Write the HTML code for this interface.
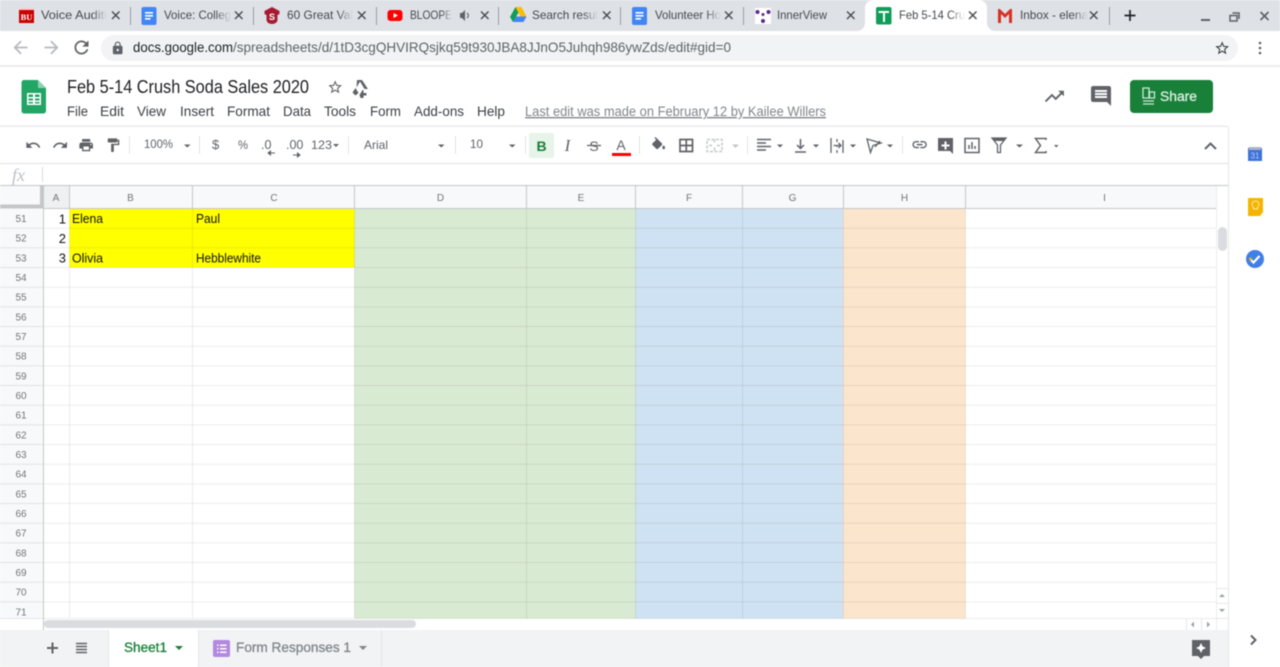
<!DOCTYPE html>
<html><head><meta charset="utf-8"><title>Feb 5-14 Crush Soda Sales 2020</title>
<style>
html,body{margin:0;padding:0;width:1280px;height:667px;overflow:hidden;background:#fff}
svg{display:block;position:absolute;left:0;top:0;filter:blur(.5px)}
text{font-family:"Liberation Sans",sans-serif}
</style></head><body>
<svg width="1280" height="667" viewBox="0 0 1280 667" xmlns="http://www.w3.org/2000/svg">
<defs>
<linearGradient id="fd"><stop offset="0" stop-color="#dee1e6" stop-opacity="0"/><stop offset="1" stop-color="#dee1e6"/></linearGradient>
<linearGradient id="fw"><stop offset="0" stop-color="#fff" stop-opacity="0"/><stop offset="1" stop-color="#fff"/></linearGradient>
</defs>
<!-- tab strip -->
<rect width="1280" height="31" fill="#dee1e6"/>
<path d="M857 31a8 8 0 0 0 8-8V8a8 8 0 0 1 8-8h106a8 8 0 0 1 8 8v15a8 8 0 0 0 8 8z" fill="#fff"/>
<g stroke="#9aa0a6" stroke-width="1">
<path d="M130.500 7v18M253.500 7v18M376.500 7v18M498.500 7v18M620.500 7v18M743.500 7v18M1109.500 7v18"/>
</g>
<g font-size="12" fill="#45494e">
<text x="41" y="19" textLength="66" lengthAdjust="spacingAndGlyphs">Voice Auditi</text>
<text x="164" y="19" textLength="67" lengthAdjust="spacingAndGlyphs">Voice: Colleg</text>
<text x="287" y="19" textLength="66" lengthAdjust="spacingAndGlyphs">60 Great Val</text>
<text x="410" y="19" textLength="42" lengthAdjust="spacingAndGlyphs">BLOOPE</text>
<text x="532" y="19" textLength="66" lengthAdjust="spacingAndGlyphs">Search resul</text>
<text x="655" y="19" textLength="66" lengthAdjust="spacingAndGlyphs">Volunteer Ho</text>
<text x="777" y="19" textLength="50" lengthAdjust="spacingAndGlyphs">InnerView</text>
<text x="899" y="19" textLength="66" lengthAdjust="spacingAndGlyphs">Feb 5-14 Cru</text>
<text x="1020" y="19" textLength="68" lengthAdjust="spacingAndGlyphs">Inbox - elena</text>
</g>
<g fill="url(#fd)">
<rect x="92" y="6" width="15" height="18"/><rect x="216" y="6" width="15" height="18"/><rect x="338" y="6" width="15" height="18"/><rect x="442" y="6" width="10" height="18"/><rect x="583" y="6" width="15" height="18"/><rect x="706" y="6" width="15" height="18"/><rect x="1073" y="6" width="15" height="18"/>
</g>
<rect x="950" y="6" width="15" height="18" fill="url(#fw)"/>
<!-- close x -->
<g stroke="#45494e" stroke-width="1.400" fill="none">
<path d="M112 11.500l7.500 7.500m0-7.500l-7.500 7.500M235 11.500l7.500 7.500m0-7.500l-7.500 7.500M358 11.500l7.500 7.500m0-7.500l-7.500 7.500M481 11.500l7.500 7.500m0-7.500l-7.500 7.500M603 11.500l7.500 7.500m0-7.500l-7.500 7.500M725 11.500l7.500 7.500m0-7.500l-7.500 7.500M847 11.500l7.500 7.500m0-7.500l-7.500 7.500M969 11.500l7.500 7.500m0-7.500l-7.500 7.500M1090 11.500l7.500 7.500m0-7.500l-7.500 7.500"/>
</g>
<!-- favicons -->
<rect x="19" y="8" width="15" height="15" fill="#cc0000"/><rect x="19" y="8" width="15" height="2" fill="#fff" opacity=".8"/>
<text x="26.500" y="20" font-size="8.500" font-weight="bold" fill="#fff" text-anchor="middle" style="font-family:'Liberation Serif',serif">BU</text>
<rect x="141.500" y="7" width="15" height="18" rx="2" fill="#4285f4"/><path d="M145 12h8v1.600h-8zM145 15h8v1.600h-8zM145 18h5.500v1.600h-5.500z" fill="#fff"/>
<path d="M272 7l7.500 4v3l-2 1v5a5.500 4 0 0 1-11 0v-5l-2-1v-3z" fill="#a51c30"/>
<text x="272" y="20" font-size="9" font-weight="bold" fill="#fff" text-anchor="middle">S</text>
<rect x="387.500" y="10" width="15" height="11" rx="3" fill="#f00"/><path d="M393.500 13l4.500 2.500-4.500 2.500z" fill="#fff"/>
<path d="M513 22l3-5.500h10.500l-3 5.500z" fill="#4285f4"/><path d="M510 17l5.500-10 3 5.500L513 22z" fill="#0f9d58"/><path d="M515.500 7h6l5 9.500h-6z" fill="#fbbc04"/>
<rect x="632" y="7" width="15" height="18" rx="2" fill="#4285f4"/><path d="M635.500 12h8v1.600h-8zM635.500 15h8v1.600h-8zM635.500 18h5.500v1.600h-5.500z" fill="#fff"/>
<rect x="755" y="8" width="16" height="16" fill="#fff"/>
<g fill="#5b2a86"><circle cx="757.500" cy="12" r="2"/><circle cx="768.500" cy="12" r="2"/><circle cx="763" cy="21" r="2"/><circle cx="763" cy="14.500" r="1.500"/></g>
<rect x="876" y="7" width="15.500" height="17.500" rx="2" fill="#0f9d58"/><path d="M878.500 11h10.500v2H885v9h-2v-9h-4.500z" fill="#fff"/>
<path d="M998 23V9h1.800l5.200 5 5.200-5h1.800v14h-3V14l-4 4-4-4v9z" fill="#d93025"/>
<!-- speaker -->
<path d="M460 13h2l3-3v11l-3-3h-2z" fill="#5f6368"/><path d="M467 13a3 3 0 0 1 0 5" stroke="#5f6368" stroke-width="1.100" fill="none"/>
<!-- new tab + window buttons -->
<path d="M1130 10v11M1124.500 15.500h11" stroke="#202124" stroke-width="1.700"/>
<path d="M1201 20h9" stroke="#5f6368" stroke-width="2"/>
<path d="M1230 15.500h7v5.500h-7zM1232.500 13h6.500v6" stroke="#5f6368" stroke-width="1.500" fill="none"/>
<path d="M1260.500 12l8 8m0-8l-8 8" stroke="#5f6368" stroke-width="1.700"/>
<!-- address bar -->
<rect y="31" width="1280" height="34" fill="#fff"/>
<rect x="101" y="35" width="1137" height="26" rx="13" fill="#f1f3f4"/>
<rect x="0" y="65" width="1280" height="2" fill="#ececee"/>
<path transform="translate(10 37) scale(.875)" d="M20 11H7.830l5.590-5.590L12 4l-8 8 8 8 1.410-1.410L7.830 13H20v-2z" fill="#b6b9bd"/>
<path transform="translate(41 37) scale(.875)" d="M12 4l-1.410 1.410L16.170 11H4v2h12.170l-5.580 5.590L12 20l8-8z" fill="#b6b9bd"/>
<path transform="translate(71 37) scale(.875)" d="M17.650 6.350C16.200 4.900 14.210 4 12 4c-4.420 0-7.990 3.580-7.990 8s3.570 8 7.990 8c3.730 0 6.840-2.550 7.730-6h-2.080c-.82 2.330-3.040 4-5.650 4-3.310 0-6-2.690-6-6s2.690-6 6-6c1.660 0 3.140.69 4.220 1.780L13 11h7V4l-2.350 2.350z" fill="#5f6368"/>
<path transform="translate(110.500 41) scale(.6)" d="M18 8h-1V6c0-2.760-2.240-5-5-5S7 3.240 7 6v2H6c-1.100 0-2 .9-2 2v10c0 1.100.9 2 2 2h12c1.100 0 2-.9 2-2V10c0-1.100-.9-2-2-2zm-6 9c-1.100 0-2-.9-2-2s.9-2 2-2 2 .9 2 2-.9 2-2 2zm3.100-9H8.900V6c0-1.710 1.390-3.100 3.100-3.100 1.710 0 3.100 1.390 3.100 3.100v2z" fill="#5f6368"/>
<text x="133" y="52" font-size="14" fill="#202124" textLength="100" lengthAdjust="spacingAndGlyphs">docs.google.com</text>
<text x="233" y="52" font-size="14" fill="#5f6368" textLength="498" lengthAdjust="spacingAndGlyphs">/spreadsheets/d/1tD3cgQHVIRQsjkq59t930JBA8JJnO5Juhqh986ywZds/edit#gid=0</text>
<path transform="translate(1214 40) scale(.68)" d="M22 9.240l-7.190-.62L12 2 9.190 8.630 2 9.240l5.460 4.730L5.820 21 12 17.270 18.180 21l-1.630-7.030L22 9.240zM12 15.400l-3.760 2.270 1-4.280-3.320-2.880 4.380-.38L12 6.100l1.710 4.040 4.380.38-3.320 2.880 1 4.280L12 15.400z" fill="#3c4043"/>
<g fill="#5f6368"><circle cx="1260" cy="43" r="1.300"/><circle cx="1260" cy="48" r="1.300"/><circle cx="1260" cy="53" r="1.300"/></g>
<!-- sheets header -->
<path d="M24 80h14l8 8v23a2.500 2.500 0 0 1-2.500 2.500h-19.500a2.500 2.500 0 0 1-2.500-2.500V82.500A2.500 2.500 0 0 1 24 80z" fill="#23a566"/>
<path d="M38 80l8 8h-8z" fill="#8ed1b1"/>
<path d="M27 93h14v12H27zM28.500 94.500v2.500h4.500v-2.500zM35 94.500v2.500h4.500v-2.500zM28.500 98.500v2h4.500v-2zM35 98.500v2h4.500v-2zM28.500 102v1.500h4.500V102zM35 102v1.500h4.500V102z" fill="#fff" fill-rule="evenodd"/>
<text x="67" y="93" font-size="18" fill="#202124" textLength="242" lengthAdjust="spacingAndGlyphs">Feb 5-14 Crush Soda Sales 2020</text>
<path transform="translate(327 79) scale(.68)" d="M22 9.240l-7.190-.62L12 2 9.190 8.630 2 9.240l5.460 4.730L5.820 21 12 17.270 18.180 21l-1.630-7.030L22 9.240zM12 15.400l-3.760 2.270 1-4.280-3.320-2.880 4.380-.38L12 6.100l1.710 4.040 4.380.38-3.320 2.880 1 4.280L12 15.400z" fill="#5f6368"/>
<path d="M357 80h5l6 9h-3.500L360 81.500l-3.500 6zM355.500 88l3 5-3 2.500-3-3zM359.500 95l3-5h1v3h3v2.500h-3V98h-3z" fill="#5f6368"/>
<g font-size="14" fill="#3c4043">
<text x="67" y="116" textLength="21" lengthAdjust="spacingAndGlyphs">File</text>
<text x="100" y="116" textLength="24" lengthAdjust="spacingAndGlyphs">Edit</text>
<text x="137" y="116" textLength="29" lengthAdjust="spacingAndGlyphs">View</text>
<text x="180" y="116" textLength="34" lengthAdjust="spacingAndGlyphs">Insert</text>
<text x="227" y="116" textLength="43" lengthAdjust="spacingAndGlyphs">Format</text>
<text x="283" y="116" textLength="28" lengthAdjust="spacingAndGlyphs">Data</text>
<text x="324" y="116" textLength="32" lengthAdjust="spacingAndGlyphs">Tools</text>
<text x="370" y="116" textLength="31" lengthAdjust="spacingAndGlyphs">Form</text>
<text x="414" y="116" textLength="50" lengthAdjust="spacingAndGlyphs">Add-ons</text>
<text x="477" y="116" textLength="28" lengthAdjust="spacingAndGlyphs">Help</text>
</g>
<text x="525" y="116" font-size="13.500" fill="#80868b" textLength="301" lengthAdjust="spacingAndGlyphs" text-decoration="underline">Last edit was made on February 12 by Kailee Willers</text>
<path transform="translate(1043 85) scale(.95)" d="M16 6l2.290 2.290-4.880 4.880-4-4L2 16.590 3.410 18l6-6 4 4 6.300-6.290L22 12V6z" fill="#5f6368"/>
<path transform="translate(1089 84)" d="M20 2H4c-1.100 0-2 .9-2 2v12c0 1.100.9 2 2 2h14l4 4V4c0-1.100-.9-2-2-2zm-2 12H6v-2h12v2zm0-3H6V9h12v2zm0-3H6V6h12v2z" fill="#5f6368"/>
<rect x="1130" y="80" width="83" height="33" rx="4" fill="#188038"/>
<path d="M1143 88h6v10h-6zM1149.500 92h5v6h-5z" fill="none" stroke="#cfe8d8" stroke-width="1.300"/>
<path d="M1143 101h11M1143 104h11" stroke="#cfe8d8" stroke-width="1.200"/>
<text x="1160" y="101" font-size="13.500" fill="#dff0e5" stroke="#dff0e5" stroke-width=".3" textLength="37" lengthAdjust="spacingAndGlyphs">Share</text>
<circle cx="1246" cy="96" r="15" fill="#8a5a46"/>
<circle cx="1240" cy="90" r="5" fill="#c9605c"/><circle cx="1252" cy="87" r="4" fill="#d9c4a8"/><circle cx="1239" cy="104" r="5.500" fill="#6fa78f"/><circle cx="1253" cy="100" r="6" fill="#6e3d2c"/><circle cx="1249" cy="107" r="3.500" fill="#d29a88"/><circle cx="1257" cy="92" r="2.500" fill="#e4a34d"/>
<!-- dividers -->
<rect x="0" y="125.500" width="1228" height="1.500" fill="#e8eaed"/>
<rect x="0" y="163" width="1228" height="1" fill="#e0e0e0"/>
<!-- toolbar -->
<g fill="#5f6368">
<path transform="translate(25 137) scale(.68)" d="M12.500 8c-2.650 0-5.050.99-6.900 2.600L2 7v9h9l-3.620-3.620c1.390-1.160 3.160-1.880 5.120-1.880 3.540 0 6.550 2.310 7.600 5.500l2.370-.78C21.080 11.030 17.150 8 12.500 8z"/>
<path transform="translate(52 137) scale(.68)" d="M18.400 10.600C16.550 8.990 14.150 8 11.500 8c-4.650 0-8.580 3.030-9.960 7.220L3.900 16c1.050-3.190 4.050-5.500 7.600-5.500 1.950 0 3.730.72 5.120 1.880L13 16h9V7l-3.600 3.600z"/>
<path transform="translate(78 137) scale(.68)" d="M19 8H5c-1.660 0-3 1.340-3 3v6h4v4h12v-4h4v-6c0-1.660-1.340-3-3-3zm-3 11H8v-5h8v5zm3-7c-.55 0-1-.45-1-1s.45-1 1-1 1 .45 1 1-.45 1-1 1zm-1-9H6v4h12V3z"/>
<path transform="translate(105 137) scale(.68)" d="M18 4V3c0-.55-.45-1-1-1H5c-.55 0-1 .45-1 1v4c0 .55.45 1 1 1h12c.55 0 1-.45 1-1V6h1v4H9v11c0 .55.45 1 1 1h2c.55 0 1-.45 1-1v-9h8V4h-3z"/>
</g>
<g stroke="#e2e3e5" stroke-width="1"><path d="M129.500 136v18M199.500 136v18M348.500 136v18M455.500 136v18M525.500 136v18M639.500 136v18M747.500 136v18M902.500 136v18"/></g>
<g font-size="12" fill="#5f6368">
<text x="144" y="148" textLength="29" lengthAdjust="spacingAndGlyphs">100%</text>
<text x="212" y="149" font-size="13">$</text>
<text x="238" y="149" textLength="10" lengthAdjust="spacingAndGlyphs">%</text>
<text x="261" y="149" font-size="12.500">.0</text>
<text x="286" y="149" font-size="12.500">.00</text>
<text x="311" y="149" textLength="21" lengthAdjust="spacingAndGlyphs">123</text>
<text x="364" y="149" textLength="24" lengthAdjust="spacingAndGlyphs">Arial</text>
<text x="470" y="148" textLength="13" lengthAdjust="spacingAndGlyphs">10</text>
</g>
<path d="M268 153h7M268 153l2.500-2v4zM293 155h7M300 155l-2.500-2v4z" stroke="#5f6368" stroke-width="1" fill="#5f6368"/>
<g fill="#5f6368">
<path d="M184 144.500h6.500l-3.250 3zM333 144h6l-3 3zM438 144.500h6.500l-3.250 3zM509 144.500h6.500l-3.250 3z"/>
<path d="M777 144.500h6l-3 3zM813 144.500h6l-3 3zM850 144.500h6l-3 3zM887 144.500h6l-3 3zM1016 144.500h7l-3.500 3zM1054 145h4.500l-2.250 2.500z"/>
</g>
<path d="M732 144.500h7l-3.500 3.500z" fill="#c4c7c9"/>
<rect x="529" y="133" width="25" height="25" rx="2" fill="#e6f4ea"/>
<text x="541.500" y="151" font-size="14" font-weight="bold" fill="#188038" text-anchor="middle">B</text>
<text x="567.500" y="151" font-size="17" font-style="italic" fill="#5f6368" text-anchor="middle" style="font-family:'Liberation Serif',serif">I</text>
<text x="594" y="151" font-size="14" fill="#5f6368" text-anchor="middle">S</text>
<path d="M587 145.500h14" stroke="#5f6368" stroke-width="1.300"/>
<text x="621" y="150" font-size="14" fill="#5f6368" text-anchor="middle">A</text>
<rect x="612" y="153" width="19" height="3" fill="#f00"/>
<path transform="translate(650 137) scale(.72)" d="M16.560 8.940L7.620 0 6.210 1.410l2.380 2.380-5.150 5.150c-.59.59-.59 1.540 0 2.120l5.500 5.500c.29.29.68.44 1.060.44s.77-.15 1.060-.44l5.500-5.500c.59-.58.59-1.530 0-2.120zM19 11.500s-2 2.170-2 3.500c0 1.100.9 2 2 2s2-.9 2-2c0-1.330-2-3.500-2-3.500z" fill="#5f6368"/>
<path d="M680 139.500h12.500v12H680zM686.250 139.500v12M680 145.500h12.500" stroke="#5f6368" stroke-width="1.700" fill="none"/>
<path d="M707 139.500h15v12h-15zM714.500 139.500v4M714.500 147.500v4M709 145.500h3M717 145.500h3" stroke="#c4c7c9" stroke-width="1.500" stroke-dasharray="3 1.500" fill="none"/>
<path d="M757 139.500h14M757 143h9M757 146.500h14M757 150h9" stroke="#5f6368" stroke-width="1.500" fill="none"/>
<path d="M800.500 139v9M797 145l3.500 3.500 3.500-3.500M795 152h11" stroke="#5f6368" stroke-width="1.500" fill="none"/>
<path d="M831 138v15M843 140v13M837 139v3M837 145v2M837 150v3M833.500 145.500h7M838.500 143l2.500 2.500-2.500 2.500" stroke="#5f6368" stroke-width="1.300" fill="none"/>
<path d="M867 139l14 4-8 2.500-2.500 7zM875 147l5-6" stroke="#5f6368" stroke-width="1.300" fill="none"/>
<path transform="translate(911 136) scale(.72)" d="M3.900 12c0-1.710 1.390-3.100 3.100-3.100h4V7H7c-2.760 0-5 2.240-5 5s2.240 5 5 5h4v-1.900H7c-1.710 0-3.100-1.390-3.100-3.100zM8 13h8v-2H8v2zm9-6h-4v1.900h4c1.710 0 3.100 1.390 3.100 3.100s-1.390 3.100-3.100 3.100h-4V17h4c2.760 0 5-2.240 5-5s-2.240-5-5-5z" fill="#5f6368"/>
<path d="M938 138h15v16l-3-3h-12zM944.500 141.500v3h-3v2h3v3h2v-3h3v-2h-3v-3z" fill="#5f6368" fill-rule="evenodd"/>
<path d="M965 138.500h14v14h-14zM969 149v-4M972 149v-7M975 149v-3" stroke="#5f6368" stroke-width="1.500" fill="none"/>
<path d="M992 138h14l-5.500 7v7.500h-3V145z" fill="#fff" stroke="#5f6368" stroke-width="1.300"/><path d="M992 138h14l-2.500 3h-9z" fill="#5f6368"/>
<path d="M1046 140v-1.500h-10.500l5 7-5 7H1046V151" stroke="#5f6368" stroke-width="1.500" fill="none"/>
<path d="M1205 149l5.500-5.500 5.500 5.500" stroke="#5f6368" stroke-width="2" fill="none"/>
<!-- formula bar -->
<text x="12" y="181" font-size="18" font-style="italic" fill="#bdc1c6" style="font-family:'Liberation Serif',serif">fx</text>
<path d="M42.500 167v15" stroke="#dadce0"/>
<rect y="185" width="1228" height="1.500" fill="#c4c7c9"/>
<!-- grid backgrounds -->
<rect x="0" y="186" width="1216" height="22" fill="#f8f9fa"/>
<rect x="43" y="186" width="26" height="22" fill="#eef0f1"/>
<rect x="0" y="208" width="43" height="411" fill="#f8f9fa"/>
<rect x="69.500" y="208.500" width="285" height="59" fill="#ffff00"/>
<rect x="354.500" y="208.500" width="281" height="410" fill="#d9ead3"/>
<rect x="635.500" y="208.500" width="207.500" height="410" fill="#cfe2f3"/>
<rect x="843" y="208.500" width="122.500" height="410" fill="#fce5cd"/>
<rect x="1216" y="186" width="12" height="444" fill="#fff"/>
<rect x="40" y="186" width="3.500" height="22" fill="#c4c7c9"/>
<rect x="0" y="204.500" width="43" height="4" fill="#c4c7c9"/>
<!-- grid lines -->
<g stroke="#000" stroke-opacity=".075" stroke-width="1" fill="none">
<path d="M43 228.200H1216M43 247.800H1216M43 267.500H1216M43 287.200H1216M43 306.900H1216M43 326.500H1216M43 346.200H1216M43 365.900H1216M43 385.500H1216M43 405.200H1216M43 424.900H1216M43 444.500H1216M43 464.200H1216M43 483.900H1216M43 503.500H1216M43 523.200H1216M43 542.900H1216M43 562.500H1216M43 582.200H1216M43 601.900H1216M0 618.500H1228"/>
<path d="M69.500 208V618M192.500 208V618M354.500 208V618M526.500 208V618M635.500 208V618M742.500 208V618M843.500 208V618M965.500 208V618M1216.500 186V630"/>
</g>
<g stroke="#e1e3e5" stroke-width="1" fill="none">
<path d="M0 228.200H43M0 247.800H43M0 267.500H43M0 287.200H43M0 306.900H43M0 326.500H43M0 346.200H43M0 365.900H43M0 385.500H43M0 405.200H43M0 424.900H43M0 444.500H43M0 464.200H43M0 483.900H43M0 503.500H43M0 523.200H43M0 542.900H43M0 562.500H43M0 582.200H43M0 601.900H43"/>
</g>
<g stroke="#c4c7c9" stroke-width="1" fill="none">
<path d="M43.500 186V630M69.500 186V208M192.500 186V208M354.500 186V208M526.500 186V208M635.500 186V208M742.500 186V208M843.500 186V208M965.500 186V208M43 208.500H1216"/>
</g>
<!-- column headers -->
<g font-size="10" fill="#70757a" text-anchor="middle">
<text x="56" y="201">A</text><text x="130.500" y="201">B</text><text x="274" y="201">C</text><text x="440.500" y="201">D</text><text x="581" y="201">E</text><text x="689" y="201">F</text><text x="792.500" y="201">G</text><text x="904.500" y="201">H</text><text x="1104.500" y="201">I</text>
</g>
<!-- row headers -->
<g font-size="10" fill="#70757a" text-anchor="middle">
<text x="21" y="222">51</text><text x="21" y="241.700">52</text><text x="21" y="261.300">53</text><text x="21" y="281">54</text><text x="21" y="300.700">55</text><text x="21" y="320.400">56</text><text x="21" y="340">57</text><text x="21" y="359.700">58</text><text x="21" y="379.400">59</text><text x="21" y="399">60</text><text x="21" y="418.700">61</text><text x="21" y="438.400">62</text><text x="21" y="458">63</text><text x="21" y="477.700">64</text><text x="21" y="497.400">65</text><text x="21" y="517">66</text><text x="21" y="536.700">67</text><text x="21" y="556.400">68</text><text x="21" y="576">69</text><text x="21" y="595.700">70</text><text x="21" y="615.400">71</text>
</g>
<!-- cells -->
<g font-size="13" fill="#111">
<text x="66" y="223.500" text-anchor="end">1</text><text x="66" y="243" text-anchor="end">2</text><text x="66" y="262.500" text-anchor="end">3</text>
<text x="72" y="223" textLength="31" lengthAdjust="spacingAndGlyphs">Elena</text>
<text x="196" y="223" textLength="24" lengthAdjust="spacingAndGlyphs">Paul</text>
<text x="72" y="262.500" textLength="31" lengthAdjust="spacingAndGlyphs">Olivia</text>
<text x="196" y="262.500" textLength="65" lengthAdjust="spacingAndGlyphs">Hebblewhite</text>
</g>
<!-- scrollbars -->
<rect x="1218" y="227" width="9" height="24" rx="4.500" fill="#dadce0"/>
<rect x="44" y="620" width="372" height="8" rx="4" fill="#dadce0"/>
<path d="M1216.500 588.500h11M1216.500 603.500h11M1186.500 619v11M1201.500 619v11M1216.500 618.500h11" stroke="#e6e7e9" fill="none"/>
<path d="M1222 594l-3 3h6zM1222 612l-3-3h6zM1191 624.500l3-3v6zM1210 624.500l-3-3v6z" fill="#9aa0a6"/>
<!-- bottom bar -->
<rect x="0" y="630" width="1228" height="37" fill="#f1f3f4"/>
<path d="M52.500 642.500v11M47 648h11" stroke="#5f6368" stroke-width="2"/>
<path d="M76 643.500h11M76 646.500h11M76 649.500h11M76 652.500h11" stroke="#5f6368" stroke-width="1.500"/>
<rect x="109" y="630" width="90" height="37" fill="#fff"/>
<path d="M108.500 630v37M198.500 630v37M381.500 630v37" stroke="#e3e5e7"/>
<text x="124" y="652" font-size="13.500" fill="#188038" stroke="#188038" stroke-width=".3" textLength="43" lengthAdjust="spacingAndGlyphs">Sheet1</text>
<path d="M175 646h8l-4 4z" fill="#188038"/>
<rect x="213" y="640" width="17" height="17" rx="2" fill="#b388e0"/>
<path d="M217 644.500h1.500v1.500H217zM220 644.500h6.500v1.500H220zM217 648h1.500v1.500H217zM220 648h6.500v1.500H220zM217 651.500h1.500v1.500H217zM220 651.500h6.500v1.500H220z" fill="#fff"/>
<text x="236" y="652" font-size="13.500" fill="#80868b" stroke="#80868b" stroke-width=".3" textLength="115" lengthAdjust="spacingAndGlyphs">Form Responses 1</text>
<path d="M359 646h8l-4 4z" fill="#80868b"/>
<path d="M1192 640h18v16h-6l-3 3-3-3h-6z" fill="#5f6368"/>
<path d="M1201 643l1.600 3.400 3.400 1.600-3.400 1.600-1.600 3.400-1.600-3.400-3.400-1.600 3.400-1.600z" fill="#fff"/>
<!-- side panel -->
<rect x="1228" y="67" width="52" height="600" fill="#fff"/>
<path d="M1228.500 127V667" stroke="#e4e5e7"/>
<path d="M1248 148h14v13h-14z" fill="#3f72d8"/><rect x="1249" y="147" width="12" height="3" fill="#aab4c8"/>
<text x="1255" y="158.500" font-size="8" fill="#b5cdf6" text-anchor="middle">31</text>
<path d="M1248 198h15v14l-3 4h-12z" fill="#f4b400"/>
<path d="M1255.500 201a3.500 3.500 0 0 0-2 6.300v1.700h4v-1.700a3.500 3.500 0 0 0-2-6.300z" fill="none" stroke="#fde9a8" stroke-width="1"/>
<circle cx="1255" cy="259" r="9" fill="#3f7fe8"/>
<path d="M1251 260l2.500 2.500 6-6.500" stroke="#fff" stroke-width="2.200" fill="none"/>
<circle cx="1250.500" cy="259" r="1.500" fill="#f4b400"/>
<path d="M1251 635.500l4.500 4.500-4.500 4.500" stroke="#5f6368" stroke-width="2" fill="none"/>
</svg>
</body></html>
